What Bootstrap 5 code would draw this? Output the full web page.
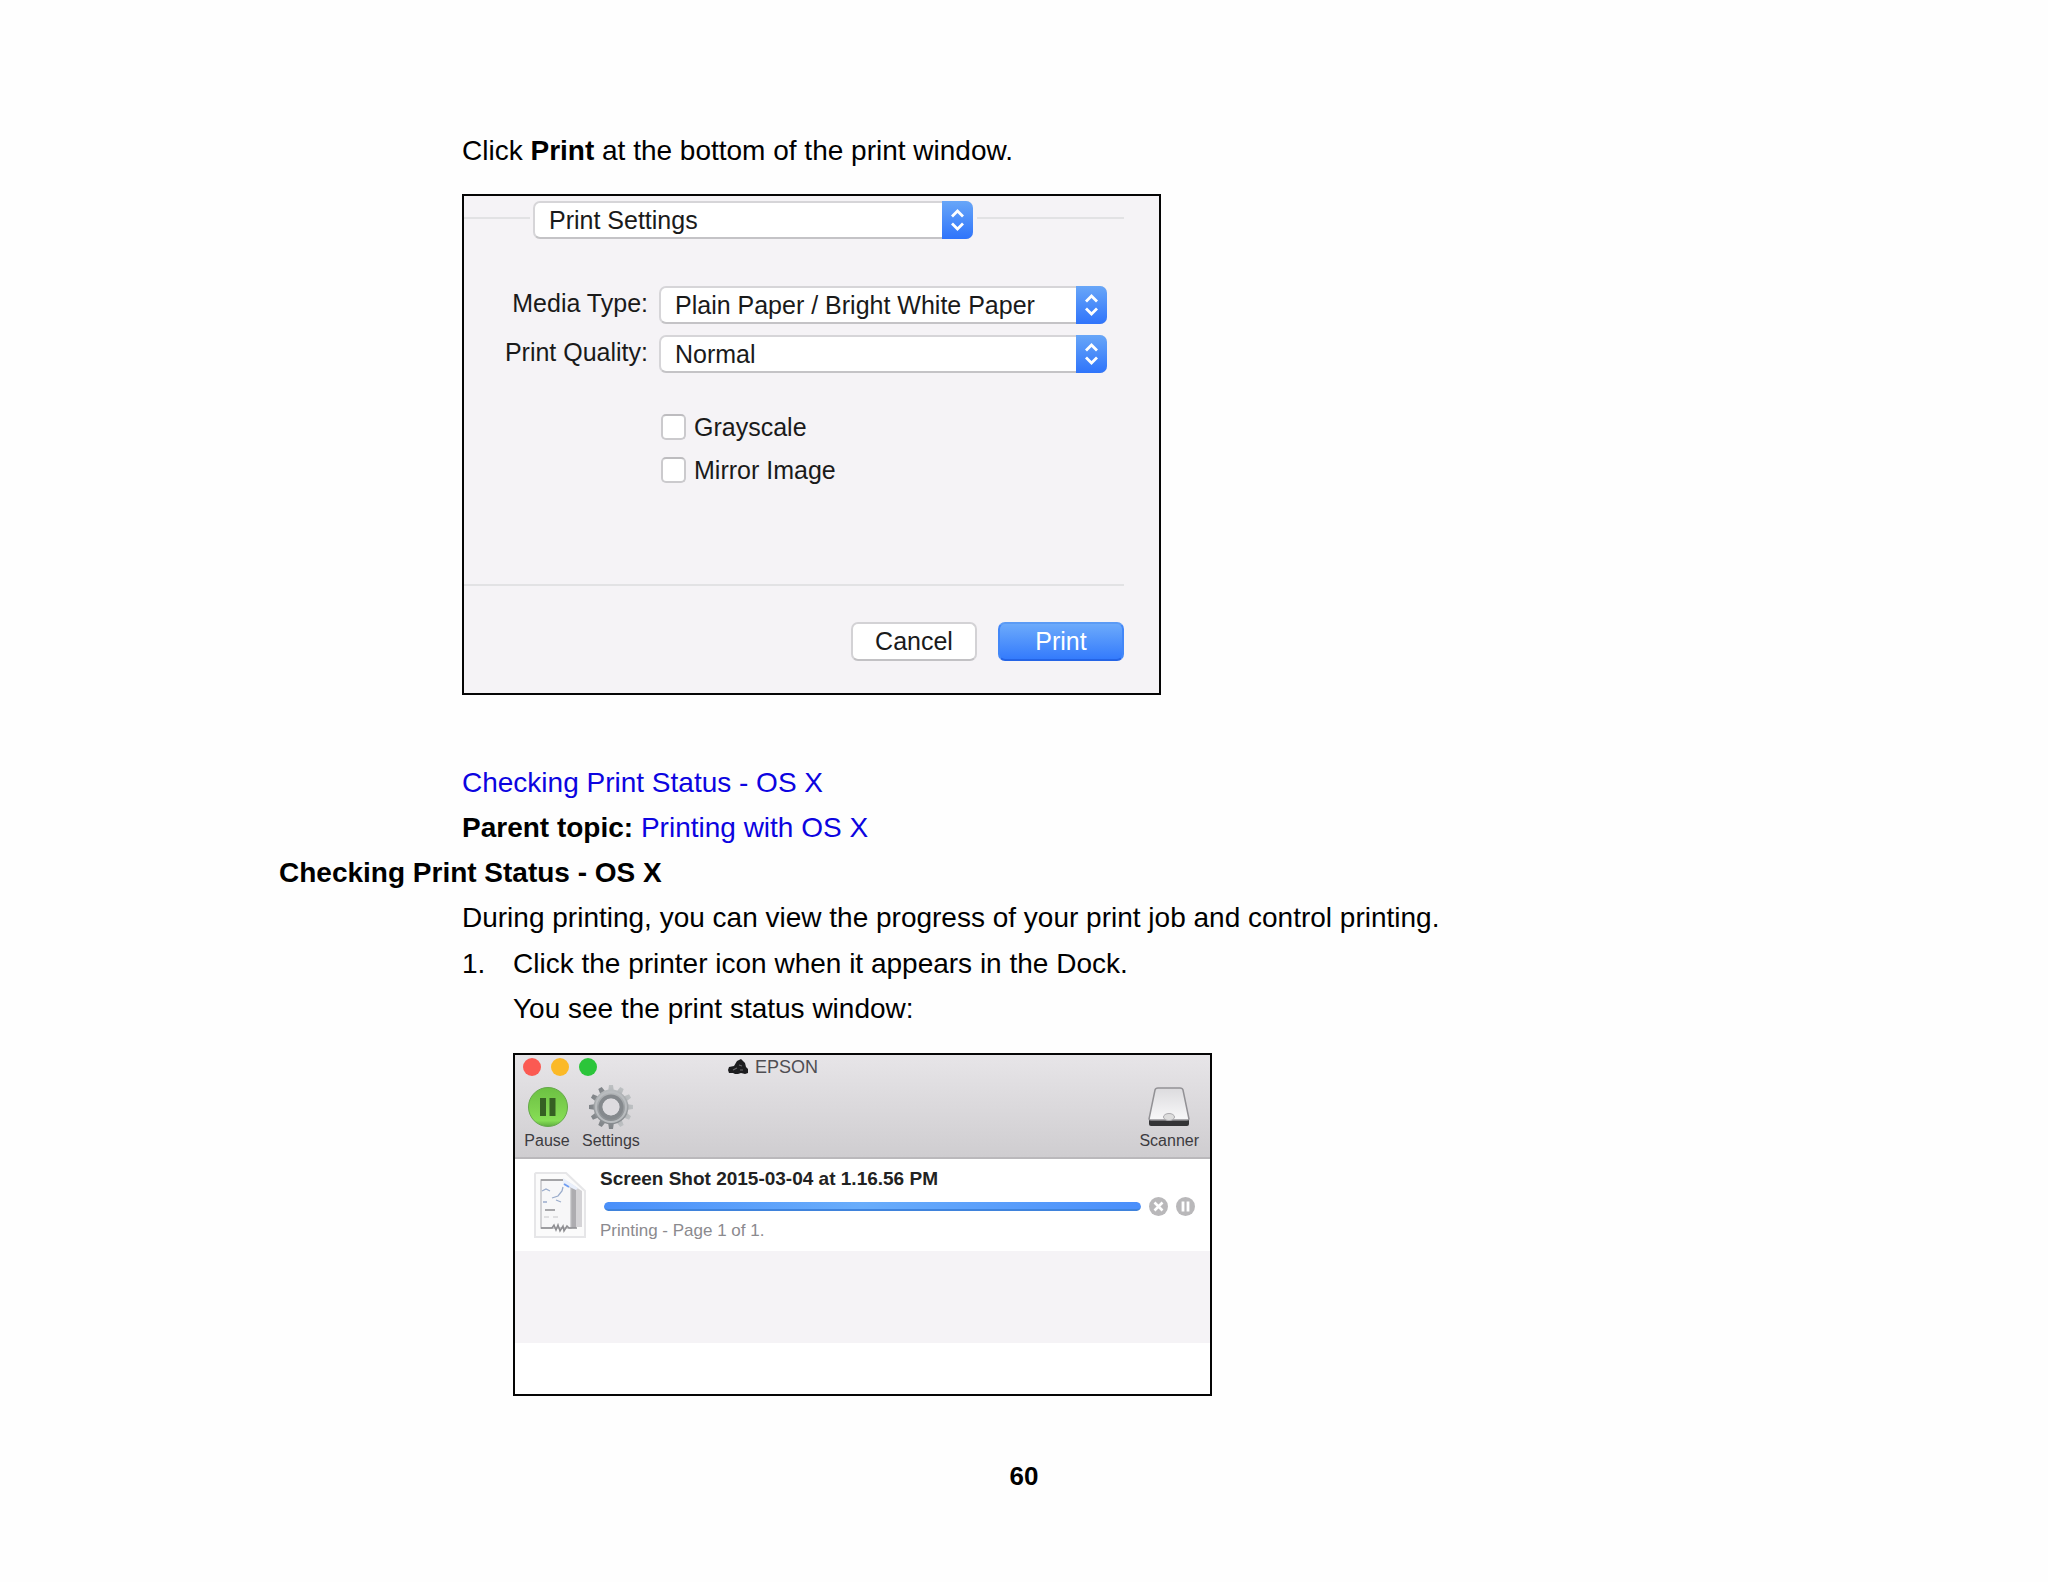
<!DOCTYPE html>
<html lang="en">
<head>
<meta charset="utf-8">
<meta name="viewport" content="width=device-width, initial-scale=1">
<title>Checking Print Status - OS X</title>
<link href="https://cdn.jsdelivr.net/npm/bootstrap@5.3.0/dist/css/bootstrap.min.css" rel="stylesheet">
<style>
  body { font-family: "Liberation Sans", Arial, sans-serif; font-size: 28px; line-height: 45px; color: #000; background: #fefefe; }
  .manual-page { padding: 128px 32px 60px 279px; }
  .indent { padding-left: 183px; }
  .manual-page h1 { font-size: 28px; line-height: 45px; font-weight: 700; margin: 0; }
  .manual-page a { color: #0c04e0; text-decoration: none; }
  .steps { margin-top: 1px; }
  .step-no { flex: 0 0 51px; }
  .shot { border: 2px solid #050505; margin-top: 22px; max-width: 699px; }
  .folio { font-size: 26px; font-weight: 700; text-align: center; margin: 58px 0 0 -247px; }

  /* print dialog */
  .dialog { background: #f5f3f6; font-size: 25px; line-height: 30px; color: #1a1a1a; padding: 5px 35px 32px 0; margin: 21px 0 65px; }
  .rule { height: 2px; background: #e2e2e4; margin-bottom: 4px; }
  .rule-lead { flex: 0 0 66px; }
  .popup { position: relative; height: 38px; }
  .popup select { width: 100%; height: 38px; appearance: none; border: 2px solid #d6d5d8; border-bottom-color: #c4c3c6; border-radius: 7px; background: #fff; color: #1a1a1a; padding: 0 34px 0 14px; line-height: 30px; }
  .popup svg { position: absolute; right: 0; top: 0; pointer-events: none; }
  .popup-main { flex: 0 1 440px; margin: 0 4px 0 3px; }
  .popup-field { flex: 0 1 448px; }
  .fields { margin-top: 47px; gap: 11px; }
  .fields > div { gap: 11px; }
  .fields label { flex: 0 0 184px; text-align: right; padding-bottom: 4px; }
  .ticks { margin: 41px 0 0 197px; gap: 17px; }
  .ticks div { height: 26px; gap: 8px; }
  .ticks .form-check-input { width: 25px; height: 26px; margin: 0; border: 2px solid #cbcacd; border-top-color: #bdbcbf; border-radius: 5px; background-color: #fff; }
  .dialog-rule { height: 2px; background: #e2e2e4; margin-top: 101px; }
  .actions { margin-top: 36px; gap: 21px; }
  .actions .btn { width: 126px; height: 39px; padding: 0 0 2px; border-radius: 7px; font-size: 25px; line-height: 30px; border: 2px solid #d3d2d5; border-bottom-color: #c2c1c4; background: #fff; color: #1a1a1a; }
  .actions .btn-go { background: linear-gradient(#6caafb, #347bfc); border-color: #5b9bf5 #4287f8 #2464e6; color: #fff; }

  /* print status window */
  .queue { background: #fff; line-height: 24px; height: 343px; }
  .queue-head { height: 104px; background: linear-gradient(#e7e5e8, #cfcdd0); border-bottom: 2px solid #bab8bb; }
  .title-row { height: 24px; padding-left: 8px; gap: 10px; font-size: 18px; color: #4f4e53; }
  .light { width: 18px; height: 18px; border-radius: 50%; }
  .light-close { background: #fb5a52; }
  .light-min { background: #fbb927; }
  .light-zoom { background: #2bc53a; }
  .title-row svg { margin-left: 121px; }
  .title-text { margin-left: -3px; }
  .tools { padding: 5px 11px 0 9px; gap: 12px; }
  .tools button { border: 0; background: none; padding: 0; font-size: 16px; line-height: 22px; color: #3c3b3f; }
  .tools svg { display: block; margin: 0 auto; }
  .job { height: 92px; padding: 8px 15px 0 17px; gap: 12px; }
  .job-title { font-size: 19px; font-weight: 700; color: #222; }
  .job-bar { height: 19px; margin: 6px 0 3px; padding-left: 4px; gap: 8px; }
  .job-bar .progress { height: 9px; border-radius: 5px; }
  .job-bar .progress-bar { background: linear-gradient(90deg, #4a90fa, #69adfb 48%, #4a8ffb); border-bottom: 2px solid #3f83dc; border-radius: 5px; }
  .job-bar button { border: 0; background: none; padding: 0; height: 19px; line-height: 0; }
  .job-note { font-size: 17px; color: #8b8a8e; }
  .stripe { height: 92px; background: #f5f3f6; }
</style>
</head>
<body>
<main class="manual-page">
  <section class="indent">
    <p class="m-0">Click <b>Print</b> at the bottom of the print window.</p>
    <form class="shot dialog">
      <div class="d-flex align-items-center">
        <div class="rule rule-lead"></div>
        <div class="popup popup-main">
          <select aria-label="Pane"><option>Print Settings</option></select>
          <svg width="31" height="38" viewBox="0 0 31 38"><defs><linearGradient id="cap" x1="0" y1="0" x2="0" y2="1"><stop offset="0" stop-color="#68a6f8"/><stop offset="1" stop-color="#2f74fb"/></linearGradient></defs><path d="M0 0h24a7 7 0 0 1 7 7v24a7 7 0 0 1-7 7H0z" fill="url(#cap)"/><path d="M10 15.500l5.500-5.500 5.500 5.500M10 22.500l5.500 5.500 5.500-5.500" fill="none" stroke="#fff" stroke-width="2.800"/></svg>
        </div>
        <div class="rule flex-grow-1"></div>
      </div>
      <div class="fields d-flex flex-column">
        <div class="d-flex align-items-center">
          <label for="media">Media Type:</label>
          <div class="popup popup-field">
            <select id="media"><option>Plain Paper / Bright White Paper</option></select>
            <svg width="31" height="38" viewBox="0 0 31 38"><path d="M0 0h24a7 7 0 0 1 7 7v24a7 7 0 0 1-7 7H0z" fill="url(#cap)"/><path d="M10 15.500l5.500-5.500 5.500 5.500M10 22.500l5.500 5.500 5.500-5.500" fill="none" stroke="#fff" stroke-width="2.800"/></svg>
          </div>
        </div>
        <div class="d-flex align-items-center">
          <label for="quality">Print Quality:</label>
          <div class="popup popup-field">
            <select id="quality"><option>Normal</option></select>
            <svg width="31" height="38" viewBox="0 0 31 38"><path d="M0 0h24a7 7 0 0 1 7 7v24a7 7 0 0 1-7 7H0z" fill="url(#cap)"/><path d="M10 15.500l5.500-5.500 5.500 5.500M10 22.500l5.500 5.500 5.500-5.500" fill="none" stroke="#fff" stroke-width="2.800"/></svg>
          </div>
        </div>
      </div>
      <div class="ticks d-flex flex-column">
        <div class="d-flex align-items-center"><input class="form-check-input" type="checkbox" id="gray"><label for="gray">Grayscale</label></div>
        <div class="d-flex align-items-center"><input class="form-check-input" type="checkbox" id="mirror"><label for="mirror">Mirror Image</label></div>
      </div>
      <div class="dialog-rule"></div>
      <div class="actions d-flex justify-content-end">
        <button type="button" class="btn">Cancel</button>
        <button type="button" class="btn btn-go">Print</button>
      </div>
    </form>
    <p class="m-0"><a href="#status">Checking Print Status - OS X</a></p>
    <p class="m-0"><b>Parent topic:</b> <a href="#printing">Printing with OS X</a></p>
  </section>

  <h1 id="status">Checking Print Status - OS X</h1>
  <section class="indent">
    <p class="m-0">During printing, you can view the progress of your print job and control printing.</p>
    <ol class="steps list-unstyled mb-0">
      <li class="d-flex">
        <span class="step-no">1.</span>
        <div class="flex-grow-1">
          <p class="m-0">Click the printer icon when it appears in the Dock.</p>
          <p class="m-0">You see the print status window:</p>
          <div class="shot queue">
            <div class="queue-head">
              <div class="title-row d-flex align-items-center">
                <span class="light light-close"></span>
                <span class="light light-min"></span>
                <span class="light light-zoom"></span>
                <svg width="20" height="16" viewBox="0 0 20 16"><path d="M0 11l1-3 5-1 3-5 4-2 4 4 1 4 2 2v4l-3 1-4-1-3 1H7l-2-1H1z" fill="#1d1d1f"/><path d="M5 11l4-2M11 6l3 1M12 11l3 0" stroke="#6a696d" stroke-width="1.200"/></svg>
                <span class="title-text">EPSON</span>
              </div>
              <div class="tools d-flex">
                <button type="button">
                  <svg width="46" height="46" viewBox="0 0 46 46"><defs><linearGradient id="green" x1="0" y1="0" x2="0" y2="1"><stop offset="0" stop-color="#6cc142"/><stop offset=".5" stop-color="#7cd04e"/><stop offset=".85" stop-color="#86de55"/><stop offset="1" stop-color="#5fae3e"/></linearGradient></defs><circle cx="24" cy="23" r="19.500" fill="url(#green)" stroke="#65a84a"/><path d="M16 14h6v18h-6zM25.500 14h6v18h-6z" fill="#356023"/></svg>
                  Pause</button>
                <button type="button">
                  <svg width="46" height="46" viewBox="0 0 46 46"><defs><linearGradient id="steel" x1="0" y1="0" x2="0" y2="46" gradientUnits="userSpaceOnUse"><stop offset="0" stop-color="#bfc2c4"/><stop offset="1" stop-color="#7e8286"/></linearGradient></defs>
                    <g fill="url(#steel)"><path id="tooth" d="M20 8l1-7h4l1 7zM20 38l1 7h4l1-7z"/><use href="#tooth" transform="rotate(30 23 23)"/><use href="#tooth" transform="rotate(60 23 23)"/><use href="#tooth" transform="rotate(90 23 23)"/><use href="#tooth" transform="rotate(120 23 23)"/><use href="#tooth" transform="rotate(150 23 23)"/></g>
                    <circle cx="23" cy="23" r="13" fill="none" stroke="url(#steel)" stroke-width="9"/><circle cx="23" cy="23" r="15" fill="none" stroke="#b9bcbf" stroke-width="2"/><circle cx="23" cy="23" r="10.500" fill="none" stroke="#85898d" stroke-width="4"/><circle cx="23" cy="23" r="8.500" fill="#dddbdf"/></svg>
                  Settings</button>
                <button type="button" class="ms-auto">
                  <svg width="46" height="46" viewBox="0 0 46 46"><defs><linearGradient id="lid" x1="0" y1="0" x2="0" y2="1"><stop offset="0" stop-color="#dcdbde"/><stop offset="1" stop-color="#f8f8f9"/></linearGradient></defs><path d="M3 34v6q0 2 2 2h36q2 0 2-2v-6z" fill="#343436"/><path d="M9 6q.5-2 3-2h22q2.500 0 3 2l6 29q0 1-2 1H5q-2 0-2-1z" fill="url(#lid)" stroke="#929195" stroke-width="1.500"/><ellipse cx="23" cy="33" rx="5.500" ry="3.500" fill="#ddd" stroke="#aaa9ad"/></svg>
                  Scanner</button>
              </div>
            </div>
            <div class="job d-flex">
              <svg class="flex-shrink-0" width="56" height="76" viewBox="0 0 56 76">
                <path d="M4 6h30l19 18v46H3V7z" fill="#fbfbfb" stroke="#e6e6e8" stroke-width="2"/>
                <path d="M35 14l15 10v36H38z" fill="#d4d3d6"/><path d="M35 17l9 6v38h-9z" fill="#adacb0"/>
                <path d="M9 13h22l8 8v40H9z" fill="#f7f7f8" stroke="#bdbdc0" stroke-width="1.300"/>
                <path d="M9 13h22" stroke="#8e8e92" stroke-width="1.300"/>
                <path d="M31 11l15 10-2 2-13-6z" fill="#e9effb"/><path d="M32 17l5 3" stroke="#6f9df2" stroke-width="2"/>
                <path d="M10 24l4-2 4 2M11 35h4M20 31l6-2 4-5 1-4M24 33l5 2" fill="none" stroke="#9aaccb" stroke-width="1.300"/><path d="M13 43h10" stroke="#8c8c90" stroke-width="1.500"/><path d="M12 50h5M21 50h5" stroke="#c6c6c9"/>
                <path d="M9 61h11l2-3 2 5 2-5 2 6 3-5 1 5 3-5 2 2h8" fill="none" stroke="#8e8e92" stroke-width="1.500"/>
              </svg>
              <div class="flex-grow-1">
                <div class="job-title">Screen Shot 2015-03-04 at 1.16.56 PM</div>
                <div class="job-bar d-flex align-items-center">
                  <div class="progress flex-grow-1" role="progressbar" aria-label="Print progress" aria-valuenow="100" aria-valuemin="0" aria-valuemax="100"><div class="progress-bar" style="width:100%"></div></div>
                  <button type="button" aria-label="Cancel job"><svg width="19" height="19" viewBox="0 0 19 19"><circle cx="9.500" cy="9.500" r="9.500" fill="#b9b8ba"/><path d="M5.500 5.500l8 8M13.500 5.500l-8 8" stroke="#fff" stroke-width="2.600"/></svg></button>
                  <button type="button" aria-label="Pause job"><svg width="19" height="19" viewBox="0 0 19 19"><circle cx="9.500" cy="9.500" r="9.500" fill="#b9b8ba"/><path d="M7 4.500v10M12 4.500v10" stroke="#fff" stroke-width="2.800"/></svg></button>
                </div>
                <div class="job-note">Printing - Page 1 of 1.</div>
              </div>
            </div>
            <div class="stripe"></div>
          </div>
        </div>
      </li>
    </ol>
  </section>
  <footer class="folio">60</footer>
</main>
<script src="https://cdn.jsdelivr.net/npm/bootstrap@5.3.0/dist/js/bootstrap.bundle.min.js"></script>
</body>
</html>
